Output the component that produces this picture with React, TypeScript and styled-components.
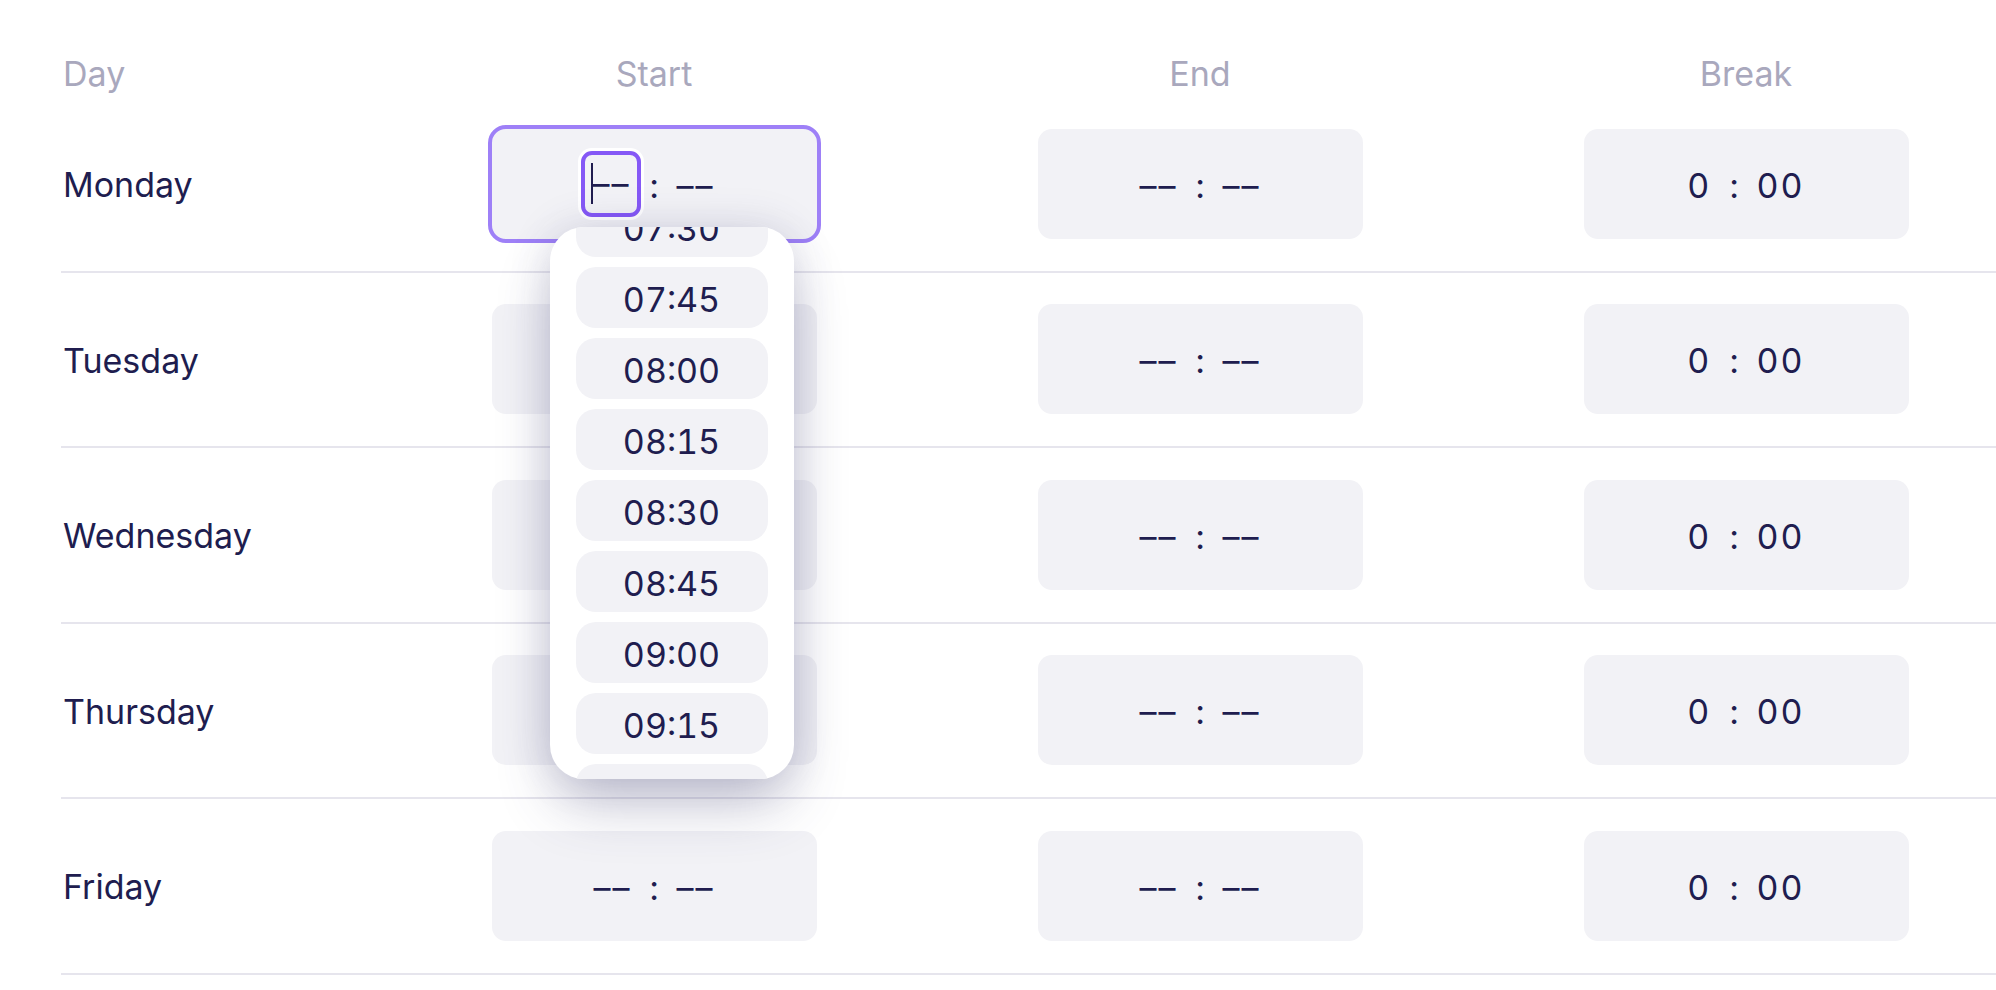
import React, { useLayoutEffect, useRef } from "react";
import styled, { createGlobalStyle } from "styled-components";

const GlobalStyle = createGlobalStyle`
  html, body {
    margin: 0;
    padding: 0;
    background: #ffffff;
    overflow: hidden;
  }
  body {
    font-family: Inter, "Noto Sans", sans-serif;
    color: #201d4f;
    -webkit-font-smoothing: antialiased;
  }
`;

const Page = styled.div`
  width: 1996px;
  height: 990px;
  overflow: hidden;
  box-sizing: border-box;
  padding-left: 61px;
`;

const Table = styled.div`
  width: 1958px;
  display: flex;
  flex-direction: column;
`;

const HeaderRow = styled.div`
  display: grid;
  grid-template-columns: 320px repeat(3, 546px);
  height: 97px;
  box-sizing: border-box;
  padding-top: 54px;
`;

const HeaderCell = styled.div<{ $align?: "left" | "center" }>`
  font-size: 34px;
  line-height: 40px;
  color: #a9a8bd;
  text-align: ${(p) => p.$align ?? "center"};
  padding-left: ${(p) => (p.$align === "left" ? "2px" : "0")};
`;

const Row = styled.div`
  display: grid;
  grid-template-columns: 320px repeat(3, 546px);
  align-items: center;
  height: 175.5px;
  box-sizing: border-box;
  border-bottom: 2px solid #e6e5ed;
`;

const DayCell = styled.div`
  font-size: 34px;
  line-height: 40px;
  color: #201d4f;
  padding: 3px 0 0 2px;
`;

const Cell = styled.div`
  display: flex;
  justify-content: center;
`;

const FieldWrap = styled.div`
  position: relative;
`;

const TimeField = styled.div<{ $focused?: boolean }>`
  width: 325px;
  height: 110px;
  box-sizing: border-box;
  padding-top: 4px;
  border-radius: 14px;
  background: #f2f2f6;
  display: flex;
  align-items: center;
  justify-content: center;
  font-size: 34px;
  line-height: 40px;
  color: #201d4f;
  outline: ${(p) => (p.$focused ? "4px solid #9e80f7" : "none")};
`;

const TimeValue = styled.div`
  display: flex;
  align-items: center;
  gap: 18px;
  font-variant-numeric: tabular-nums;
`;

const Segment = styled.span`
  letter-spacing: 2px;
  white-space: nowrap;
`;

const Colon = styled.span`
  display: inline-block;
`;

const ActiveSegment = styled.span`
  display: flex;
  align-items: center;
  height: 66px;
  box-sizing: border-box;
  padding: 0 7px 0 6px;
  margin: -4px -10px 0 -12px;
  border: 4.5px solid #8558f6;
  border-radius: 11px;
  box-shadow: 0 0 0 3px #ffffff;
  letter-spacing: 2px;
  white-space: nowrap;
`;

const Caret = styled.span`
  display: inline-block;
  width: 2px;
  height: 41px;
  background: #201d4f;
  margin-right: -1px;
`;

const Popup = styled.div`
  position: absolute;
  top: 98px;
  left: 58px;
  width: 244px;
  height: 552px;
  background: #ffffff;
  border-radius: 34px;
  overflow: hidden;
  z-index: 10;
  box-shadow: 0 30px 60px -8px rgba(60, 60, 110, 0.33),
    0 0 44px rgba(60, 60, 110, 0.14);
`;

const OptionList = styled.div`
  height: 100%;
  overflow-y: auto;
  box-sizing: border-box;
  padding: 10px 26px;
  display: flex;
  flex-direction: column;
  gap: 10px;
  scrollbar-width: none;
  &::-webkit-scrollbar {
    display: none;
  }
`;

const Option = styled.div`
  flex: none;
  height: 61px;
  box-sizing: border-box;
  padding-top: 5px;
  border-radius: 20px;
  background: #f2f2f6;
  display: flex;
  align-items: center;
  justify-content: center;
  font-size: 34px;
  line-height: 40px;
  color: #201d4f;
  font-variant-numeric: tabular-nums;
`;

const DASH = "\u2013\u2013";

const days = ["Monday", "Tuesday", "Wednesday", "Thursday", "Friday"];

const times: string[] = [];
for (let h = 7; h < 11; h++) {
  for (let m = 0; m < 60; m += 15) {
    times.push(`${String(h).padStart(2, "0")}:${String(m).padStart(2, "0")}`);
  }
}

function EmptyTime() {
  return (
    <TimeValue>
      <Segment>{DASH}</Segment>
      <Colon>:</Colon>
      <Segment>{DASH}</Segment>
    </TimeValue>
  );
}

function BreakTime() {
  return (
    <TimeValue>
      <Segment>0</Segment>
      <Colon>:</Colon>
      <Segment>00</Segment>
    </TimeValue>
  );
}

function TimePopup() {
  const ref = useRef<HTMLDivElement>(null);
  useLayoutEffect(() => {
    // 07:30 is the third entry; scroll so that it is half hidden at the top
    if (ref.current) ref.current.scrollTop = 10 + 2 * 71 + 31;
  }, []);
  return (
    <Popup>
      <OptionList ref={ref}>
        {times.map((t) => (
          <Option key={t}>{t}</Option>
        ))}
      </OptionList>
    </Popup>
  );
}

function FocusedStart() {
  return (
    <FieldWrap>
      <TimeField $focused>
        <TimeValue>
          <ActiveSegment>
            <Caret />
            {DASH}
          </ActiveSegment>
          <Colon>:</Colon>
          <Segment>{DASH}</Segment>
        </TimeValue>
      </TimeField>
      <TimePopup />
    </FieldWrap>
  );
}

export default function App() {
  return (
    <>
      <GlobalStyle />
      <Page>
        <Table>
          <HeaderRow>
            <HeaderCell $align="left">Day</HeaderCell>
            <HeaderCell>Start</HeaderCell>
            <HeaderCell>End</HeaderCell>
            <HeaderCell>Break</HeaderCell>
          </HeaderRow>
          {days.map((d, i) => (
            <Row key={d}>
              <DayCell>{d}</DayCell>
              <Cell>
                {i === 0 ? (
                  <FocusedStart />
                ) : (
                  <TimeField>
                    <EmptyTime />
                  </TimeField>
                )}
              </Cell>
              <Cell>
                <TimeField>
                  <EmptyTime />
                </TimeField>
              </Cell>
              <Cell>
                <TimeField>
                  <BreakTime />
                </TimeField>
              </Cell>
            </Row>
          ))}
        </Table>
      </Page>
    </>
  );
}
